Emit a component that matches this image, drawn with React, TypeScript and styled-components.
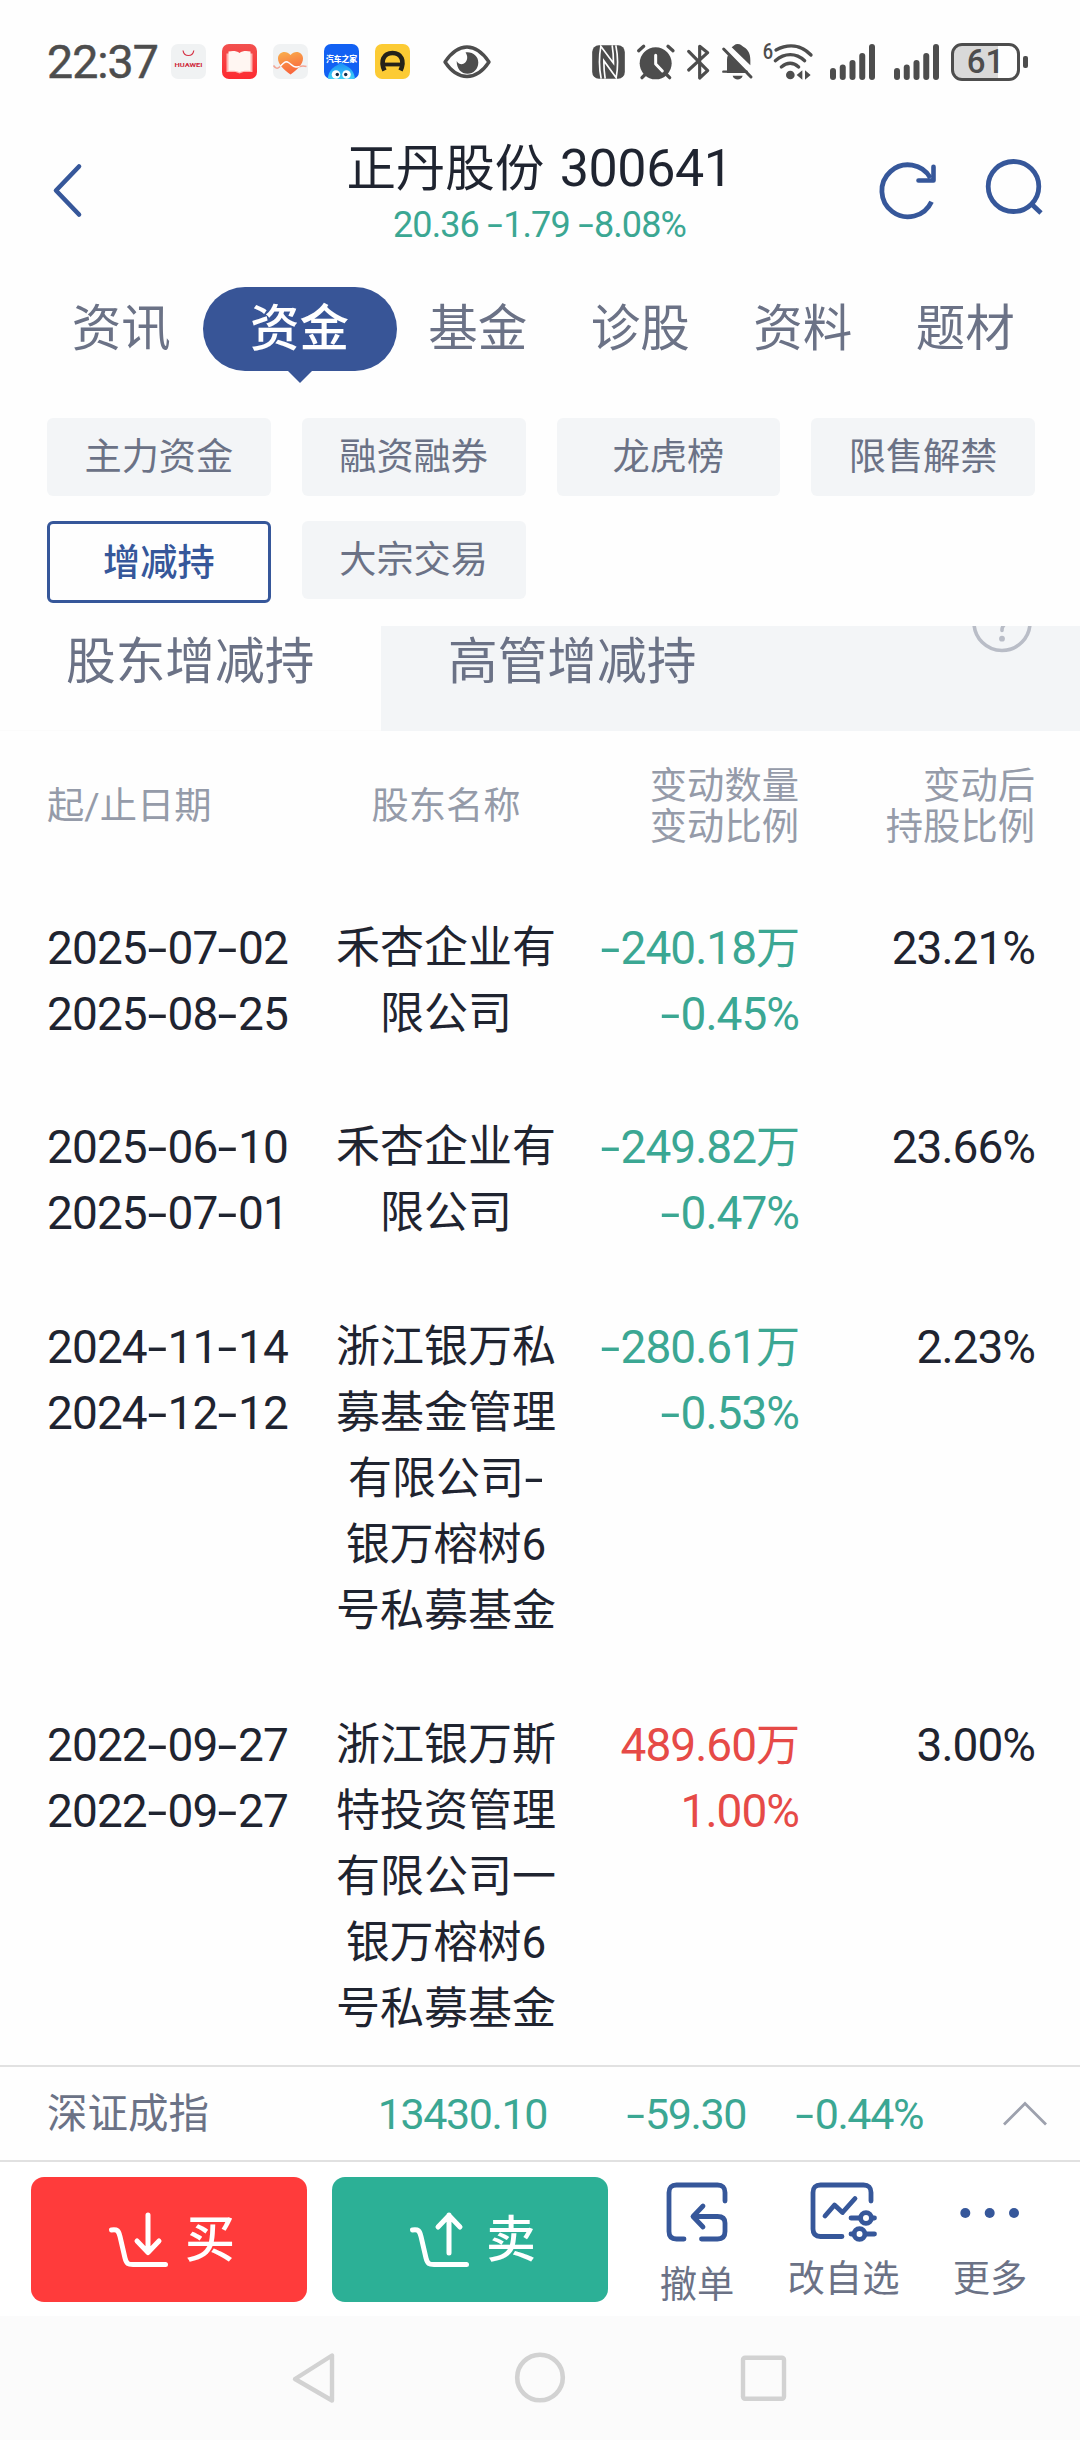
import React from "react";
import styled, { createGlobalStyle } from "styled-components";

const BLUE = "#36579a";
const GREEN = "#3ba793";
const RED = "#e64a47";
const INK = "#1f2430";
const SLATE = "#6b7286";
const MUTED = "#959ba9";
const STATUS = "#4d4d4d";
const PANEL = "#f3f5f7";

const GlobalStyle = createGlobalStyle`
  *, *::before, *::after { box-sizing: border-box; }
  body {
    margin: 0;
    background: #fefefe;
    font-family: Roboto, "Noto Sans CJK SC", sans-serif;
    color: ${INK};
  }
  svg { display: block; flex: none; overflow: visible; }
`;

const Screen = styled.div`
  width: 1080px;
  height: 2440px;
  display: flex;
  flex-direction: column;
  overflow: hidden;
  background: #fefefe;
`;

/* ---------- status bar ---------- */

const StatusBar = styled.div`
  height: 123px;
  flex: none;
  display: flex;
  align-items: center;
  padding: 0 52px 0 47px;
  color: ${STATUS};
`;

const Clock = styled.div`
  width: 124px;
  font-size: 46.5px;
  line-height: 60px;
  font-weight: 400;
  letter-spacing: -1px;
  -webkit-text-stroke: 0.5px ${STATUS};
`;

const AppIcons = styled.div`
  display: flex;
  gap: 16px;
`;

const EyeBox = styled.div`
  margin-left: 33px;
`;

const StatusRight = styled.div`
  margin-left: auto;
  display: flex;
  align-items: center;
`;

const Spacer = styled.div<{ $w: number }>`
  width: ${(p) => p.$w}px;
  flex: none;
`;

const Battery = styled.div`
  width: 69px;
  height: 38px;
  border: 3px solid ${STATUS};
  border-radius: 11px;
  background: linear-gradient(90deg, #d9d9d9 0 70%, #fefefe 70%);
  display: flex;
  align-items: center;
  justify-content: center;
  font-size: 33px;
  font-weight: 500;
  line-height: 32px;
`;

const BatteryNub = styled.div`
  width: 5px;
  height: 12px;
  margin-left: 3px;
  border-radius: 2px;
  background: ${STATUS};
`;

/* ---------- header ---------- */

const Header = styled.header`
  height: 137px;
  flex: none;
  display: flex;
  justify-content: space-between;
  padding: 0 36px 0 51px;
`;

const HeaderSide = styled.div<{ $end?: boolean }>`
  width: 170px;
  display: flex;
  justify-content: ${(p) => (p.$end ? "flex-end" : "flex-start")};
  gap: 45px;
  padding-top: 34px;
`;

const TitleBlock = styled.div`
  text-align: center;
  white-space: nowrap;
  padding: 14px 0 0;
  margin-right: 16px;
`;

const Title = styled.h1`
  margin: 0;
  font-size: 49.5px;
  line-height: 64px;
  font-weight: 400;
`;

const TitleCode = styled.span`
  margin-left: 3px;
  font-size: 52px;
  line-height: 1;
  letter-spacing: -0.4px;
`;

const Quote = styled.div`
  font-size: 36px;
  line-height: 48px;
  color: ${GREEN};
  letter-spacing: -0.9px;
`;

/* ---------- tabs ---------- */

const Tabs = styled.nav`
  height: 158px;
  flex: none;
  display: flex;
  padding: 27px 0 0 40px;
`;

const Tab = styled.div<{ $active?: boolean }>`
  position: relative;
  width: ${(p) => (p.$active ? 194 : 162.5)}px;
  height: 84px;
  border-radius: 42px;
  background: ${(p) => (p.$active ? "#385597" : "transparent")};
  color: ${(p) => (p.$active ? "#fff" : SLATE)};
  font-size: 49.5px;
  font-weight: ${(p) => (p.$active ? 500 : 400)};
  line-height: 84px;
  text-align: center;
  &::after {
    content: "";
    display: ${(p) => (p.$active ? "block" : "none")};
    position: absolute;
    left: 84px;
    top: 83px;
    border: 13px solid transparent;
    border-top-color: #385597;
    border-bottom: 0;
  }
`;

const Chips = styled.div`
  height: 208px;
  flex: none;
  display: grid;
  grid-template-columns: repeat(4, 1fr);
  grid-auto-rows: max-content;
  align-items: start;
  gap: 25px 31px;
  padding: 0 45px 0 47px;
`;

const Chip = styled.div<{ $active?: boolean }>`
  height: ${(p) => (p.$active ? 82 : 78)}px;
  border: ${(p) => (p.$active ? `3px solid ${BLUE}` : "0")};
  border-radius: 6px;
  background: ${(p) => (p.$active ? "#fefefe" : PANEL)};
  color: ${(p) => (p.$active ? BLUE : SLATE)};
  font-size: 37.2px;
  font-weight: ${(p) => (p.$active ? 500 : 400)};
  line-height: 78px;
  text-align: center;
`;

/* ---------- holder tabs ---------- */

const HolderTabs = styled.div`
  height: 105px;
  flex: none;
  display: flex;
  overflow: hidden;
  font-size: 49.7px;
  line-height: 72px;
  color: ${SLATE};
`;

const HolderTab = styled.div<{ $active?: boolean }>`
  flex: ${(p) => (p.$active ? "0 0 381px" : "1")};
  padding-left: ${(p) => (p.$active ? 66 : 67)}px;
  background: ${(p) => (p.$active ? "#fefefe" : PANEL)};
  border-bottom: ${(p) => (p.$active ? "1px solid #fbfbfb" : "0")};
`;

const HelpSlot = styled.div`
  width: 109px;
  padding-left: 1px;
  background: ${PANEL};
  svg { margin-top: -33px; }
`;

/* ---------- table ---------- */

const Table = styled.div`
  height: 1334px;
  flex: none;
  overflow: hidden;
`;

const Row = styled.div`
  display: grid;
  grid-template-columns: 289px 220px 243px 236px;
  padding: 0 45px 0 47px;
  margin-bottom: 67.7px;
  line-height: 66px;
`;

const HeadRow = styled(Row)`
  height: 183.5px;
  margin: 0;
  padding-top: 35px;
  font-size: 37.3px;
  line-height: 41px;
  color: ${MUTED};
`;

const HeadCell = styled.div<{ $align?: string; $single?: boolean }>`
  text-align: ${(p) => p.$align ?? "left"};
  padding-top: ${(p) => (p.$single ? 20 : 0)}px;
`;

const DateCell = styled.div`
  font-size: 46px;
  letter-spacing: -0.9px;
`;

const NameCell = styled.div`
  font-size: 44px;
  text-align: center;
  white-space: nowrap;
`;

const ValueCell = styled.div<{ $color?: string }>`
  font-size: 46px;
  letter-spacing: -1px;
  text-align: right;
  white-space: nowrap;
  color: ${(p) => p.$color ?? INK};
`;

const Line = styled.div`
  height: 66px;
`;

const Unit = styled.span`
  font-size: 44px;
  line-height: 1;
`;

const Dash = styled.span`
  display: inline-block;
  width: 0.45em;
  text-align: center;
  letter-spacing: 0;
  transform: scaleX(1.55);
`;

/* ---------- index strip ---------- */

const IndexBar = styled.div`
  height: 95px;
  flex: none;
  display: grid;
  grid-template-columns: 162px 338px 199px 177px 1fr;
  align-items: center;
  border-top: 2px solid #e1e1e1;
  padding: 0 33px 0 47px;
  color: ${GREEN};
  font-size: 43px;
  letter-spacing: -1.4px;
  line-height: 94px;
  text-align: right;
`;

const IndexName = styled.div`
  font-size: 40.5px;
  letter-spacing: 0;
  text-align: left;
  color: ${SLATE};
`;

const ChevronSlot = styled.div`
  display: flex;
  justify-content: flex-end;
`;

/* ---------- action bar ---------- */

const ActionBar = styled.div`
  height: 156px;
  flex: none;
  display: flex;
  border-top: 2px solid #e1e1e1;
  padding: 15px 0 0 31px;
  background: #fff;
`;

const TradeButton = styled.div<{ $bg: string }>`
  width: 276px;
  height: 125px;
  margin-right: 25px;
  border-radius: 13px;
  background: ${(p) => p.$bg};
  color: #fff;
  display: flex;
  align-items: center;
  padding-left: 76px;
  gap: 16px;
  font-size: 50px;
  font-weight: 500;
  line-height: 60px;
`;

const Tool = styled.div<{ $w: number; $drop?: number }>`
  width: ${(p) => p.$w}px;
  display: flex;
  flex-direction: column;
  align-items: center;
  padding-top: 5px;
  font-size: 37.3px;
  line-height: 48px;
  color: ${SLATE};
  span { margin-top: ${(p) => 12.5 + (p.$drop ?? 0)}px; }
`;

const NavBar = styled.div`
  flex: 1;
  display: flex;
  justify-content: center;
  align-items: flex-start;
  gap: 176px;
  padding-top: 34px;
  background: #fbfbfb;
`;

/* ---------- helpers ---------- */

const Num = ({ children }: { children: string }) => (
  <>
    {children.split(/(-|万)/).map((part, i) =>
      part === "-" ? <Dash key={i}>-</Dash> : part === "万" ? <Unit key={i}>万</Unit> : part
    )}
  </>
);

const Signal = () => (
  <svg width="45" height="40" viewBox="0 0 45 40" fill={STATUS}>
    {[26, 22.5, 18, 11, 2].map((y, i) => (
      <rect key={i} x={i * 9.75} y={y} width="6" height={38 - y} rx="3" />
    ))}
  </svg>
);

const records = [
  { dates: ["2025-07-02", "2025-08-25"], name: ["禾杏企业有", "限公司"], change: ["-240.18万", "-0.45%"], after: "23.21%" },
  { dates: ["2025-06-10", "2025-07-01"], name: ["禾杏企业有", "限公司"], change: ["-249.82万", "-0.47%"], after: "23.66%" },
  {
    dates: ["2024-11-14", "2024-12-12"],
    name: ["浙江银万私", "募基金管理", "有限公司-", "银万榕树6", "号私募基金"],
    change: ["-280.61万", "-0.53%"],
    after: "2.23%",
  },
  {
    dates: ["2022-09-27", "2022-09-27"],
    name: ["浙江银万斯", "特投资管理", "有限公司一", "银万榕树6", "号私募基金"],
    change: ["489.60万", "1.00%"],
    after: "3.00%",
  },
];

const NameLine = ({ text }: { text: string }) => (
  <Line>{text.endsWith("-") ? <>{text.slice(0, -1)}<Dash>-</Dash></> : text}</Line>
);

const StatusIcons = () => (
  <AppIcons>
    <svg width="35" height="35" viewBox="0 0 35 35">
      <rect width="35" height="35" rx="7" fill="#f0f2f3" />
      <path d="M12 6.500c.5 3.200 2.500 5 5.400 5s4.900-1.800 5.400-5" fill="none" stroke="#d63447" strokeWidth="1.200" />
      <text x="17.500" y="22.500" fontSize="6" fontWeight="700" fill="#cf2a3c" textAnchor="middle" textLength="28" lengthAdjust="spacingAndGlyphs">HUAWEI</text>
    </svg>
    <svg width="35" height="35" viewBox="0 0 35 35">
      <defs>
        <linearGradient id="readBg" x1="0" y1="0" x2="0" y2="1">
          <stop offset="0" stopColor="#f2514f" />
          <stop offset="1" stopColor="#fd2a30" />
        </linearGradient>
      </defs>
      <rect width="35" height="35" rx="7" fill="url(#readBg)" />
      <path d="M4.500 9.500h26v18.500h-9l-4 1.500-4-1.500h-9z" fill="#ffb4b0" />
      <path d="M6.500 7.500c4-.8 8-.8 11 1.500 3-2.300 7-2.300 11-1.500v19.500c-4-.6-8-.4-11 1.300-3-1.700-7-1.900-11-1.300z" fill="#fff6f2" />
    </svg>
    <svg width="35" height="35" viewBox="0 0 35 35">
      <defs>
        <linearGradient id="heartBg" x1="0" y1="0" x2="0.300" y2="1">
          <stop offset="0" stopColor="#f9b04d" />
          <stop offset="1" stopColor="#f9663d" />
        </linearGradient>
      </defs>
      <rect width="35" height="35" rx="7" fill="#f0f2f3" />
      <path d="M17.500 30.500C10 25 5 20 5 14.500 5 8 13 5.500 17.500 11 22 5.500 30 8 30 14.500c0 5.500-5 10.500-12.500 16z" fill="url(#heartBg)" />
      <path d="M.5 21.500c2 3 4 3.500 6 1.500 4-4 6-6.500 9-4.500 3 1.800 4 4.500 7.500 4.500 4 0 5-2 10.500-.5" fill="none" stroke="#f3a595" strokeWidth="1.500" />
      <path d="M7 22.500c4-4 5.500-6 8.500-4 3 1.800 4 4.500 7.500 4.500 1.500 0 2.500-.3 3.500-.6" fill="none" stroke="#fff" strokeWidth="1.300" />
    </svg>
    <svg width="35" height="35" viewBox="0 0 35 35">
      <defs>
        <clipPath id="autoClip"><rect width="35" height="35" rx="7" /></clipPath>
        <linearGradient id="autoDrop" x1="0" y1="0" x2="0" y2="1">
          <stop offset="0" stopColor="#1b8df5" />
          <stop offset="1" stopColor="#3fd3f7" />
        </linearGradient>
      </defs>
      <g clipPath="url(#autoClip)">
        <rect width="35" height="35" fill="#1261f3" />
        <path d="M17 18.500c2.500 3 13 4 14 16.500H4c.5-12 10.500-13.500 13-16.500z" fill="url(#autoDrop)" />
        <circle cx="12" cy="30.500" r="4.300" fill="#fff" />
        <circle cx="22.500" cy="30.500" r="4.300" fill="#fff" />
        <circle cx="13.300" cy="30.500" r="1.700" fill="#142c4b" />
        <circle cx="21.700" cy="30.500" r="1.700" fill="#142c4b" />
      </g>
      <text x="17.500" y="17.500" fontSize="7.800" fontWeight="900" fill="#fff" textAnchor="middle">汽车之家</text>
    </svg>
    <svg width="35" height="35" viewBox="0 0 35 35">
      <rect width="35" height="35" rx="7" fill="#fccb34" />
      <path d="M9.500 26.500C5 17 8.500 9 17.500 9s12.500 8 8 17.500" fill="none" stroke="#24221a" strokeWidth="4.600" />
      <path d="M8 20.500h19" stroke="#24221a" strokeWidth="3.800" />
    </svg>
  </AppIcons>
);

export default function App() {
  return (
    <>
      <GlobalStyle />
      <Screen>
        <StatusBar>
          <Clock>22:37</Clock>
          <StatusIcons />
          <EyeBox>
            <svg width="48" height="34" viewBox="0 0 48 34">
              <path d="M2 17C9 6.500 16 2 24 2s15 4.500 22 15c-7 10.500-14 14.500-22 14.500S9 27.500 2 17z" fill="none" stroke={STATUS} strokeWidth="3.400" strokeLinejoin="round" />
              <path d="M22.500 7.500c7-1 12.800 3.600 12.800 10S30.500 28.800 24.500 28.800 13.500 24 13.700 16c2 3.600 6 4 8.300 1.800 2.800-2.600 3-6.800.5-10.300z" fill={STATUS} />
            </svg>
          </EyeBox>
          <StatusRight>
            <svg width="33" height="40" viewBox="21.500 20 99 120">
              <rect x="22" y="30" width="98" height="100" rx="20" fill={STATUS} />
              <path d="M49 130C43 100 43 60 48 33L86 84C86 66 85 48 82 30" fill="none" stroke="#fefefe" strokeWidth="5" />
              <path d="M93 30C99 60 99 100 94 127L57 76C57 95 58 112 61 130" fill="none" stroke="#fefefe" strokeWidth="5" />
            </svg>
            <Spacer $w={12.5} />
            <svg width="37.500" height="40" viewBox="157 20 112.500 120" stroke={STATUS} strokeLinecap="round" fill="none">
              <circle cx="213" cy="84" r="48" fill={STATUS} stroke="none" />
              <path d="M162 46l15-13M265 46l-15-13M172 127l14-14M255 127l-14-14" strokeWidth="10" />
              <path d="M213 60v26l20 21" stroke="#fefefe" strokeWidth="9" strokeLinejoin="round" />
            </svg>
            <Spacer $w={12} />
            <svg width="23.500" height="40" viewBox="305 20 70.500 120">
              <path d="M310 48l57 58-24 22V33l24 19-57 52" fill="none" stroke={STATUS} strokeWidth="9.500" strokeLinecap="round" strokeLinejoin="round" />
            </svg>
            <Spacer $w={12} />
            <svg width="31" height="40" viewBox="411 20 93 120">
              <path d="M426 112V73c0-5 1-10 3-14l54 54h-66zM440 36c6-4 9-10 18-10s12 5 18 9c14 7 20 22 20 38v17z" fill={STATUS} />
              <path d="M416 41l82 84" stroke={STATUS} strokeWidth="9" strokeLinecap="round" />
              <path d="M415 109h70" stroke={STATUS} strokeWidth="7" strokeLinecap="round" />
              <path d="M443 121h30c-4 15-26 15-30 0z" fill={STATUS} />
            </svg>
            <Spacer $w={10} />
            <svg width="51" height="40" viewBox="534 20 153 120">
              <text x="533" y="71" fontSize="64" fontWeight="500" fill={STATUS} textLength="31" lengthAdjust="spacingAndGlyphs">6</text>
              <g fill="none" stroke={STATUS} strokeWidth="10" strokeLinecap="round">
                <path d="M573 44c38-20 76-15 105 15" />
                <path d="M571 76c28-24 62-24 88 0" />
                <path d="M589 95c17-14 36-14 52 0" />
              </g>
              <circle cx="616" cy="119" r="13" fill={STATUS} />
              <path d="M635 119l17-14v28zM677 119l-17-14v28z" fill={STATUS} />
            </svg>
            <Spacer $w={16} />
            <Signal />
            <Spacer $w={19} />
            <Signal />
            <Spacer $w={12} />
            <Battery>61</Battery>
            <BatteryNub />
          </StatusRight>
        </StatusBar>

        <Header>
          <HeaderSide>
            <svg width="34" height="66" viewBox="0 0 34 66">
              <path d="M28 9.500L5 33.500l23 24" fill="none" stroke={BLUE} strokeWidth="4.600" strokeLinecap="round" strokeLinejoin="round" />
            </svg>
          </HeaderSide>
          <TitleBlock>
            <Title>
              正丹股份 <TitleCode>300641</TitleCode>
            </Title>
            <Quote><Num>20.36 -1.79 -8.08%</Num></Quote>
          </TitleBlock>
          <HeaderSide $end>
            <svg width="60" height="64" viewBox="0 0 60 64" fill="none" stroke={BLUE} strokeWidth="4.800">
              <path d="M52.500 44.700A26 26 0 1 1 51.500 21" />
              <path d="M54.500 9.700v13.800h-15" strokeWidth="4.600" strokeLinecap="round" strokeLinejoin="round" />
            </svg>
            <svg width="60" height="64" viewBox="0 0 60 64" fill="none" stroke={BLUE} strokeWidth="4.800">
              <ellipse cx="29.500" cy="29.500" rx="25.300" ry="25" />
              <path d="M47.500 47l9.500 9" />
            </svg>
          </HeaderSide>
        </Header>

        <Tabs>
          {["资讯", "资金", "基金", "诊股", "资料", "题材"].map((t) => (
            <Tab key={t} $active={t === "资金"}>{t}</Tab>
          ))}
        </Tabs>

        <Chips>
          {["主力资金", "融资融券", "龙虎榜", "限售解禁", "增减持", "大宗交易"].map((t) => (
            <Chip key={t} $active={t === "增减持"}>{t}</Chip>
          ))}
        </Chips>

        <HolderTabs>
          <HolderTab $active>股东增减持</HolderTab>
          <HolderTab>高管增减持</HolderTab>
          <HelpSlot>
            <svg width="60" height="60" viewBox="0 0 60 60" fill="none" stroke="#b9bdc7" strokeWidth="3.600">
              <circle cx="30" cy="29.500" r="28" />
              <path d="M21 23c0-5 4-9 9-9s9 4 9 9c0 6-9 7-9 13.500v1" strokeLinecap="round" />
              <circle cx="30" cy="45.700" r="2.900" fill="#b9bdc7" stroke="none" />
            </svg>
          </HelpSlot>
        </HolderTabs>

        <Table>
          <HeadRow>
            <HeadCell $single>起/止日期</HeadCell>
            <HeadCell $single $align="center">股东名称</HeadCell>
            <HeadCell $align="right">变动数量<br />变动比例</HeadCell>
            <HeadCell $align="right">变动后<br />持股比例</HeadCell>
          </HeadRow>
          {records.map((r, i) => (
            <Row key={i}>
              <DateCell>
                {r.dates.map((d, j) => <Line key={j}><Num>{d}</Num></Line>)}
              </DateCell>
              <NameCell>
                {r.name.map((n, j) => <NameLine key={j} text={n} />)}
              </NameCell>
              <ValueCell $color={r.change[0].startsWith("-") ? GREEN : RED}>
                {r.change.map((c, j) => <Line key={j}><Num>{c}</Num></Line>)}
              </ValueCell>
              <ValueCell>{r.after}</ValueCell>
            </Row>
          ))}
        </Table>

        <IndexBar>
          <IndexName>深证成指</IndexName>
          <div>13430.10</div>
          <div><Num>-59.30</Num></div>
          <div><Num>-0.44%</Num></div>
          <ChevronSlot>
            <svg width="44" height="26" viewBox="0 0 44 26">
              <path d="M1 23.500L22 2.500l21 21" fill="none" stroke="#9da1ad" strokeWidth="2.800" />
            </svg>
          </ChevronSlot>
        </IndexBar>

        <ActionBar>
          <TradeButton $bg="#ff3b3b">
            <svg width="62" height="56" viewBox="0 0 62 56" fill="none" stroke="#fff" strokeWidth="5" strokeLinecap="round" strokeLinejoin="round">
              <path d="M4.500 18c6-.8 7 .5 8.500 6.500l5 21.500c1.500 6 3 6.500 8 6.500h32.500" />
              <path d="M41 3v37M30 29l11 11.500L52 29" />
            </svg>
            买
          </TradeButton>
          <TradeButton $bg="#2cb096">
            <svg width="62" height="56" viewBox="0 0 62 56" fill="none" stroke="#fff" strokeWidth="5" strokeLinecap="round" strokeLinejoin="round">
              <path d="M4.500 18c6-.8 7 .5 8.500 6.500l5 21.500c1.500 6 3 6.500 8 6.500h32.500" />
              <path d="M41 3v38M30 15L41 3.500 52 15" />
            </svg>
            卖
          </TradeButton>
          <Tool $w={128} $drop={6}>
            <svg width="62" height="60" viewBox="0 0 62 60" fill="none" stroke={BLUE} strokeWidth="4.800" strokeLinecap="round" strokeLinejoin="round">
              <path d="M59 19V10.500q0-7.500-7.500-7.500h-41Q3 3 3 10.500v39Q3 57 10.500 57H18" />
              <path d="M35.500 57h16q7.500 0 7.500-7.500V41q0-6.500-7.500-6.500H28M37 24L27 34.500l10 10.500" />
            </svg>
            <span>撤单</span>
          </Tool>
          <Tool $w={165}>
            <svg width="68" height="60" viewBox="0 0 68 60" fill="none" stroke={BLUE} strokeWidth="4.800" strokeLinecap="round" strokeLinejoin="round">
              <path d="M61 19V10.500Q61 3 53.500 3h-43Q3 3 3 10.500v36.500Q3 54.500 10.500 54.500H32" />
              <path d="M15 34l9.500-11 8 7.500L45 16.500M41 36h9M61.500 36h3M41 52h3M56 52h8.500" />
              <circle cx="56" cy="36" r="5.400" />
              <circle cx="49.500" cy="52" r="5.400" />
            </svg>
            <span>改自选</span>
          </Tool>
          <Tool $w={128}>
            <svg width="60" height="60" viewBox="0 0 60 60" fill={BLUE}>
              <circle cx="5.300" cy="31" r="5" />
              <circle cx="29.700" cy="31" r="5" />
              <circle cx="54" cy="31" r="5" />
            </svg>
            <span>更多</span>
          </Tool>
        </ActionBar>

        <NavBar>
          <svg width="46" height="56" viewBox="1.500 0 46 56" fill="none" stroke="#d2d2d2" strokeWidth="4.400" strokeLinejoin="round">
            <path d="M41.500 5.500v45L4.500 29z" />
          </svg>
          <svg width="52" height="56" viewBox="0 0 52 56" fill="none" stroke="#d2d2d2" strokeWidth="4.600">
            <circle cx="26" cy="27.500" r="22.800" />
          </svg>
          <svg width="46" height="56" viewBox="1.500 0 46 56" fill="none" stroke="#d2d2d2" strokeWidth="4.400">
            <rect x="2.500" y="7.700" width="41" height="41" rx="2" />
          </svg>
        </NavBar>
      </Screen>
    </>
  );
}
